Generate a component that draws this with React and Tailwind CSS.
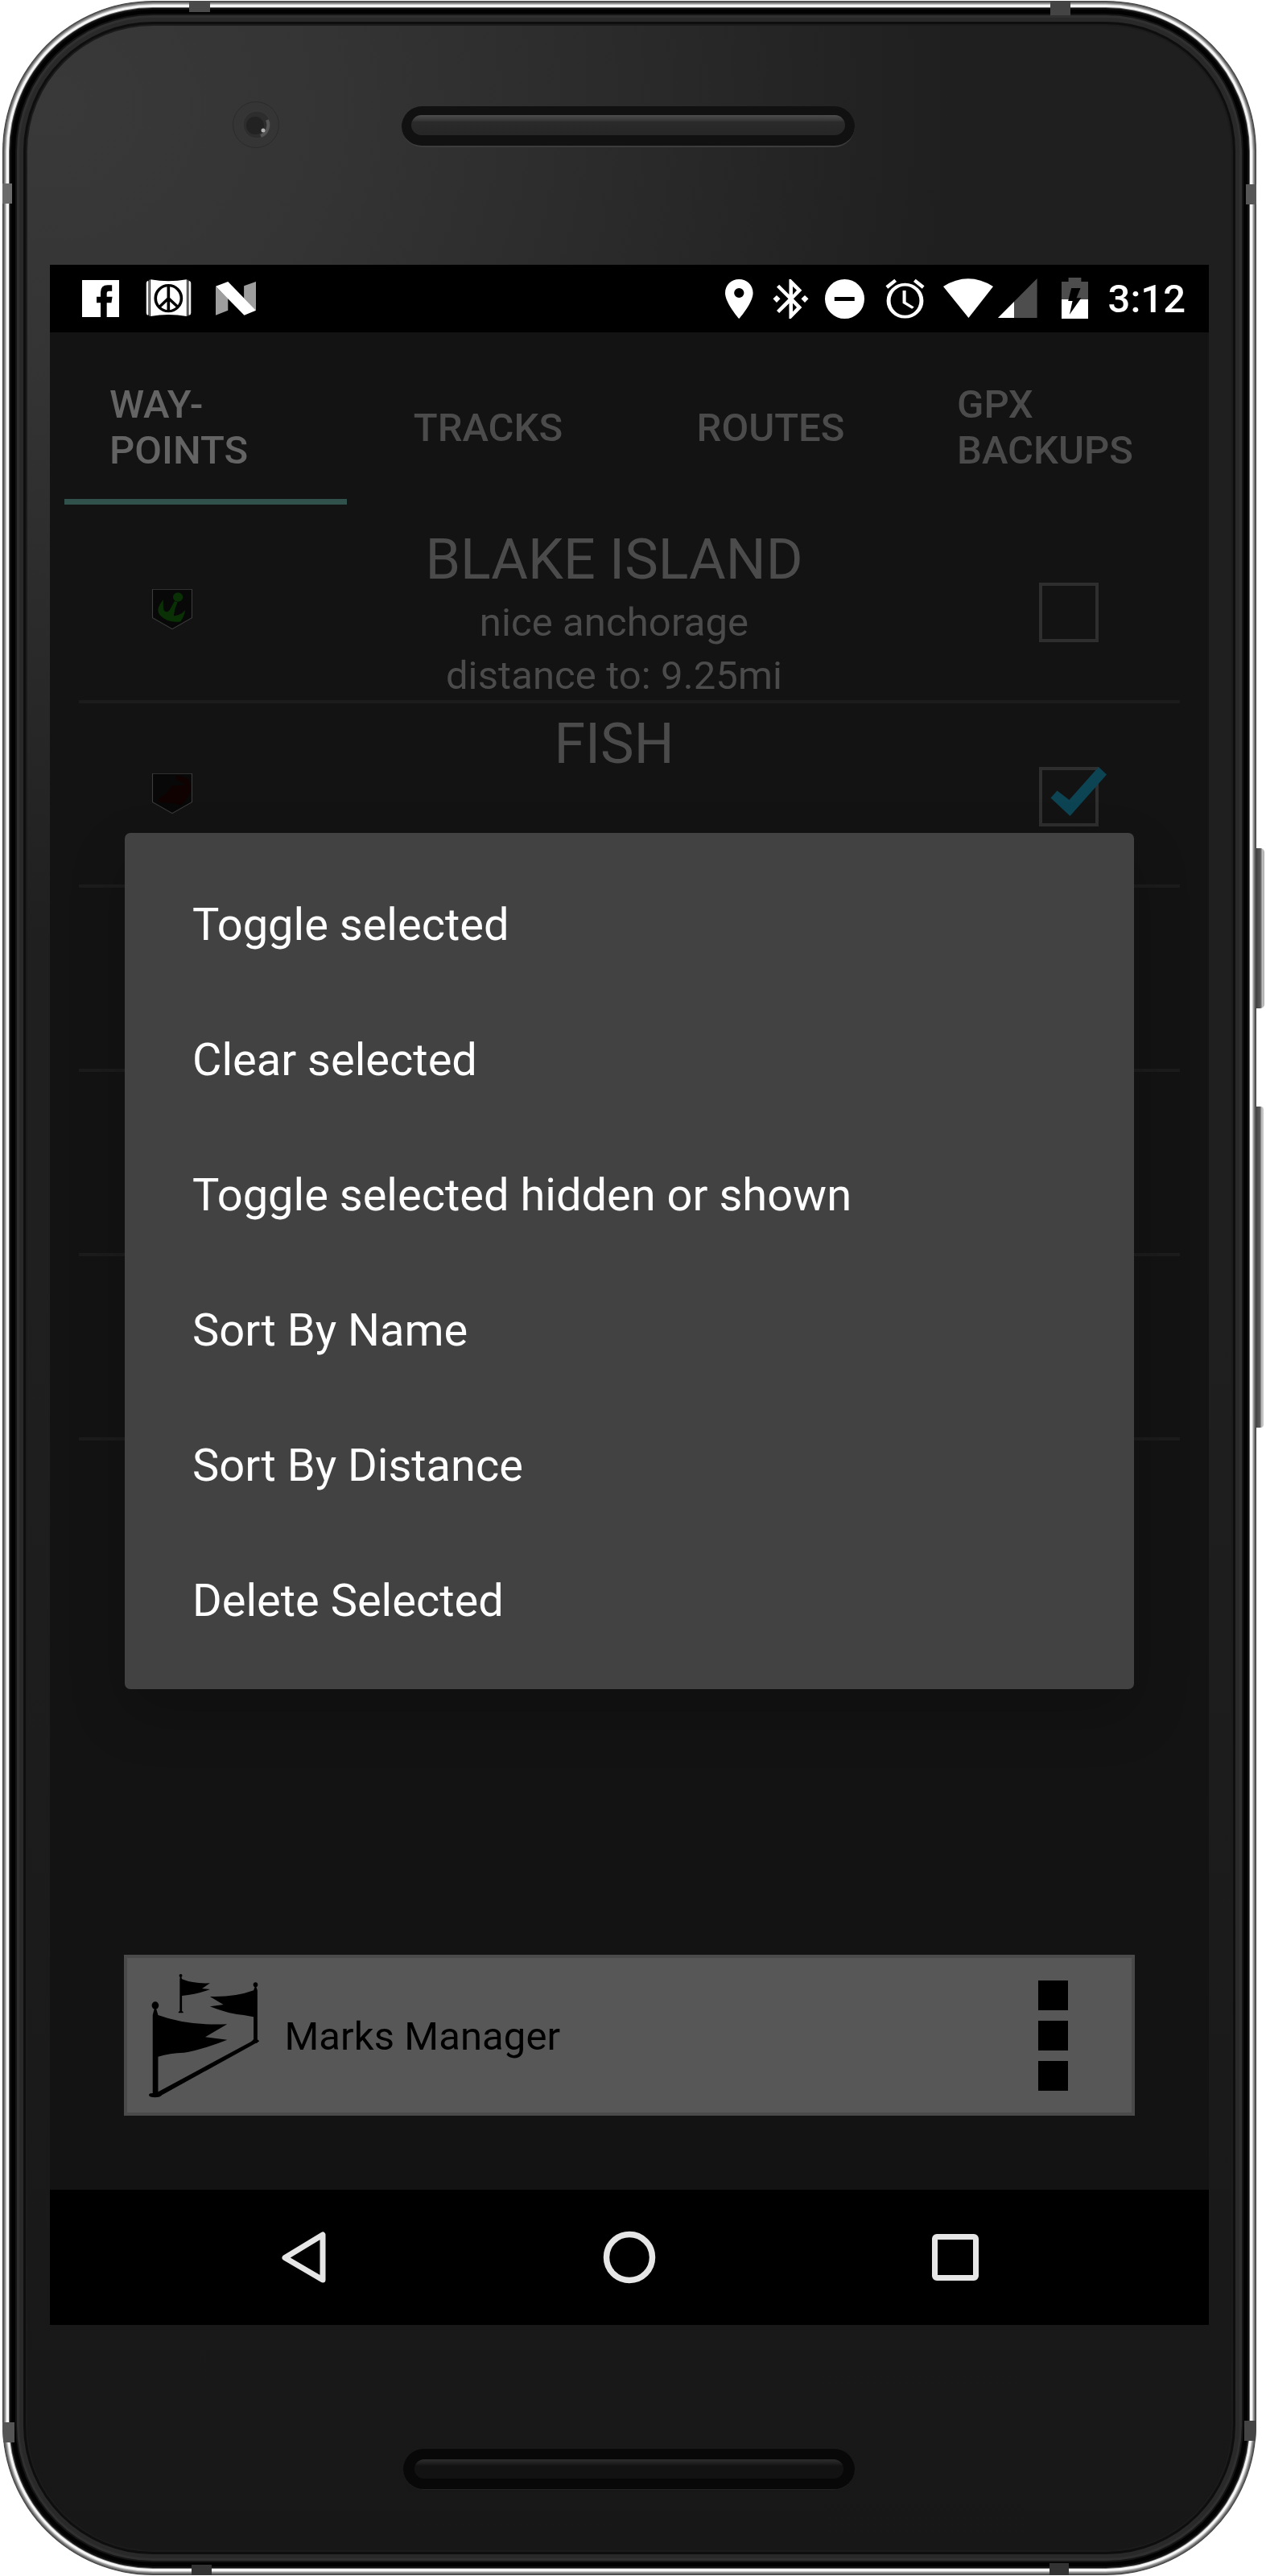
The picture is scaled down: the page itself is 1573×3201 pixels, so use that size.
import React from "react";

const TABS = [
  { label: ["WAY-", "POINTS"], active: true },
  { label: ["TRACKS"] },
  { label: ["ROUTES"] },
  { label: ["GPX", "BACKUPS"] },
];

const MENU = [
  "Toggle selected",
  "Clear selected",
  "Toggle selected hidden or shown",
  "Sort By Name",
  "Sort By Distance",
  "Delete Selected",
];

/* Status glyph: all share a 52px height, drawn on a 156-unit tall grid. */
function Glyph({ x, w, y = 75, width, className, children }) {
  return (
    <svg
      className={"h-[52px] shrink-0 " + (className || "")}
      width={width}
      height="52"
      viewBox={`${x} ${y} ${w} 156`}
      preserveAspectRatio="none"
      fill="#fff"
    >
      {children}
    </svg>
  );
}

function StatusBar() {
  return (
    <div className="flex h-[84px] shrink-0 items-center bg-black pl-[40px]">
      <Glyph x={267} w={120} y={1035} width={46}>
        <path d="M267 1044H387V1182H347V1129H362L365 1106H347V1094Q347 1085 354 1085H364V1063H350Q327 1063 327 1090V1106H314V1129H327V1182H267Z" />
      </Glyph>
      <Glyph x={472} w={150} y={1035} width={57.4} className="ml-[32.6px]">
        <path d="M488 1042Q546 1054 605 1042V1179Q546 1167 488 1179Z" />
        <path d="M480 1048Q475 1048 475 1056V1166Q475 1174 480 1174ZM613 1048Q618 1048 618 1056V1166Q618 1174 613 1174Z" stroke="#fff" strokeWidth="2" />
        <path d="M484.500 1043V1178M608.500 1043V1178" fill="none" stroke="#fff" strokeWidth="2" />
        <g fill="none" stroke="#000" strokeWidth="9.500">
          <ellipse cx="546" cy="1112" rx="42" ry="48" />
          <path d="M546 1064V1160M546 1112L516 1145M546 1112L577 1145" />
        </g>
      </Glyph>
      <Glyph x={700} w={131} y={1035} width={50} className="ml-[30px]">
        <path fill="#9e9e9e" d="M700 1068L740 1112V1157L700 1175ZM792 1066L831 1050V1158L792 1112Z" />
        <path d="M700 1067L740 1050L831 1157L793 1175Z" />
      </Glyph>

      <Glyph x={91} w={76} width={34.6} className="ml-[583.4px]">
        <path fillRule="evenodd" d="M129 81C108 81 91 103 91 132C91 170 129 228 129 228C129 228 167 170 167 132C167 103 150 81 129 81ZM129 150A13.500 18 0 1 1 129 114A13.500 18 0 1 1 129 150Z" />
      </Glyph>
      <Glyph x={220} w={99} width={45} className="ml-[24px]">
        <path d="M265 81H270L300 122L277 154L300 186L270 228H265V171L238 207L231 198L263 154L231 110L238 101L265 138ZM275 108V139L286 122ZM275 170V202L286 186Z" fillRule="evenodd" />
        <path d="M231 141L241 154L231 168L221 154ZM308 141L318 154L308 168L298 154Z" />
      </Glyph>
      <Glyph x={363} w={108} width={49} className="ml-[20px]">
        <path fillRule="evenodd" d="M417 81A54 73.500 0 1 0 417 228A54 73.500 0 1 0 417 81ZM389 147H444V162H389Z" />
      </Glyph>
      <Glyph x={528} w={108} width={49} className="ml-[26px]">
        <ellipse cx="582" cy="161" rx="45" ry="60" fill="none" stroke="#fff" strokeWidth="11" />
        <path d="M580 123V168L604 188" fill="none" stroke="#fff" strokeWidth="9" />
        <path d="M553 80L559 90L535 116L529 106ZM611 80L605 90L629 116L635 106Z" />
      </Glyph>
      <Glyph x={686} w={136} width={62} className="ml-[23px]">
        <path d="M686 108Q754 50 822 108L755 225Z" />
      </Glyph>
      <Glyph x={836} w={107} width={48.6} className="ml-[6px]">
        <path fill="#4d4d4d" d="M943 78V225H836Z" />
        <path d="M880 165V225H836Z" />
      </Glyph>
      <Glyph x={1009} w={73} width={33} className="ml-[30px]">
        <path fill="#4d4d4d" d="M1028 75H1063V90H1082V156H1009V90H1028Z" />
        <path d="M1009 156H1082V228H1009Z" />
        <path fill="#000" d="M1036 114H1061L1050 151H1063L1031 212L1039 162H1027Z" />
      </Glyph>
      <span className="ml-[25px] text-[49px] leading-[57px] font-medium text-white">3:12</span>
    </div>
  );
}

function Tabs() {
  return (
    <div className="mx-[18px] mt-[22px] grid h-[192px] shrink-0 grid-cols-4">
      {TABS.map((t) => (
        <div
          key={t.label[0]}
          className={
            "relative flex items-center justify-center text-[49px] leading-[57px] font-medium " +
            (t.active ? "text-[#646464]" : "text-[#4b4b4b]")
          }
        >
          <div className={t.label.length > 1 ? "w-full pl-[56px]" : ""}>
            {t.label.map((l) => (
              <div key={l} className="whitespace-nowrap">{l}</div>
            ))}
          </div>
          {t.active && <div className="absolute inset-x-0 bottom-0 h-[7px] bg-[#31514d]" />}
        </div>
      ))}
    </div>
  );
}

function Shield({ children }) {
  return (
    <svg className="-mt-[2px] ml-[91px] shrink-0" width="50" height="50" viewBox="0 0 106 130" preserveAspectRatio="none">
      <path d="M1 1H105V93L53 129L1 93Z" fill="#080808" stroke="#3c3c3c" strokeWidth="2.5" />
      {children}
    </svg>
  );
}

const Anchor = () => (
  <Shield>
    <ellipse cx="68" cy="26" rx="13" ry="15" fill="#0a3005" />
    <path fill="#0a3005" d="M59 39L67 42Q58 66 57 87Q74 86 87 68Q86 86 75 105Q40 110 22 86Q6 68 30 34Q28 54 31 68Q38 80 47 66Z" />
  </Shield>
);

const Fish = () => (
  <Shield>
    <path fill="#110202" d="M62 6Q84 10 96 20Q104 34 101 58Q96 78 80 98L74 104L66 98Q40 96 15 92Q18 78 30 72Q46 56 50 42Q64 38 88 38Q76 26 66 22Z" />
  </Shield>
);

function Checkbox({ checked }) {
  return (
    <div className="relative mt-[6px] mr-[101px] h-[74px] w-[74px] shrink-0 border-[4px] border-[#2e2e2e]">
      {checked && (
        <svg className="absolute -top-[6px] left-[9px]" width="72" height="64" viewBox="0 0 72 64">
          <path fill="#0d4453" d="M1.500 40.500L9.500 31.500L24.500 43L61 2L71 11.500L25.500 63Z" />
        </svg>
      )}
    </div>
  );
}

function Row({ icon, title, lines = [], checked, empty }) {
  return (
    <div className="flex h-[229px] shrink-0 items-center border-b-[4px] border-[#1c1c1c]">
      {!empty && (
        <>
          {icon}
          <div className="h-full flex-1 pt-[9px] pr-[4px] text-center text-[#4b4b4b]">
            <div className="mb-[5px] text-[70px] leading-[82px]">{title}</div>
            {lines.map((l) => (
              <div key={l} className="text-[49px] leading-[66px] tracking-[0.1px]">{l}</div>
            ))}
          </div>
          <Checkbox checked={checked} />
        </>
      )}
    </div>
  );
}

function Dialog() {
  return (
    <div className="absolute top-[706px] left-[93px] flex w-[1254px] flex-col rounded-[7px] bg-[#424242] pt-[30px] pb-[26px] shadow-[0_30px_70px_rgba(0,0,0,0.2)]">
      {MENU.map((m) => (
        <div key={m} className="flex h-[168px] items-center px-[84px] text-[56px] leading-[66px] text-white">
          {m}
        </div>
      ))}
    </div>
  );
}

function MarksBar() {
  return (
    <div className="mx-auto mt-auto mb-[92px] flex h-[200px] w-[1256px] shrink-0 items-center border-[4px] border-[#4a4a4b] bg-[#575757]">
      <svg className="ml-[27px] shrink-0" width="138.400" height="156.700" viewBox="140 155 350 470" preserveAspectRatio="none">
        <ellipse cx="160" cy="278" rx="11" ry="14" />
        <path d="M157 290H163L169 314Q260 354 386 348L317 396L386 406Q300 446 250 454Q205 456 169 469V604L181 612Q176 621 160 621Q140 621 140 612Q140 605 152 605V314Z" />
        <path d="M166 602L466 410L480 416L178 614Z" />
        <ellipse cx="475" cy="201" rx="7" ry="9" />
        <path d="M473 208H477L481 222V405L487 411L478 419L462 413L469 404V321L438 314Q390 310 332 282L374 275L332 245Q410 248 469 222Z" />
        <ellipse cx="240" cy="167" rx="5" ry="6" />
        <path d="M238 172H242L244 180Q280 198 332 195L307 215L332 218Q290 238 244 242V299L248 302V306H233V302L237 299V180Z" />
      </svg>
      <span className="mt-[3px] ml-[30px] text-[49px] leading-[57px] tracking-[0.1px] text-black">Marks Manager</span>
      <div className="mr-[79px] ml-auto flex flex-col gap-[13px]">
        <div className="h-[37px] w-[37px] bg-black" />
        <div className="h-[37px] w-[37px] bg-black" />
        <div className="h-[37px] w-[37px] bg-black" />
      </div>
    </div>
  );
}

function NavBar() {
  return (
    <div className="flex h-[168px] shrink-0 items-center bg-black pl-[287px]">
      <svg width="58" height="66" viewBox="0 0 58 66" fill="none" stroke="#e6e6e6" strokeWidth="7" strokeLinejoin="round">
        <path d="M52 5V61L5 33.500Z" />
      </svg>
      <svg className="ml-[342px]" width="66" height="66" viewBox="0 0 66 66" fill="none" stroke="#e6e6e6" strokeWidth="7.500">
        <circle cx="33" cy="33" r="28.500" />
      </svg>
      <div className="ml-[343px] h-[58px] w-[58px] rounded-[6px] border-[7px] border-[#e6e6e6]" />
    </div>
  );
}

function Screen() {
  return (
    <div className="relative flex h-[2560px] w-[1440px] flex-col bg-[#131313]">
      <StatusBar />
      <Tabs />
      <div className="mt-[18px] ml-[36px] flex w-[1368px] flex-col">
        <Row icon={<Anchor />} title="BLAKE ISLAND" lines={["nice anchorage", "distance to: 9.25mi"]} />
        <Row icon={<Fish />} title="FISH" checked />
        <Row empty />
        <Row empty />
        <Row empty />
      </div>
      <MarksBar />
      <NavBar />
      <Dialog />
    </div>
  );
}

function Camera() {
  return (
    <svg className="absolute top-[123px] left-[286px]" width="64" height="64" viewBox="0 0 64 64">
      <circle cx="32" cy="32" r="28.500" fill="#353535" stroke="#2b2b2b" />
      <circle cx="33" cy="32" r="17" fill="#2d2d2d" stroke="#3a3a3a" />
      <circle cx="31" cy="33" r="11" fill="#222" />
      <path d="M46 26A15 15 0 0 1 38 46" fill="none" stroke="#555" strokeWidth="4" />
      <circle cx="41" cy="39" r="2.500" fill="#b5b5b5" />
    </svg>
  );
}

export default function App() {
  return (
    <div className="relative h-[3201px] w-[1573px] overflow-hidden bg-white font-['Roboto',sans-serif]">
      <div className="absolute top-[1054px] left-[1555px] h-[199px] w-[16px] rounded-r-[5px] bg-[linear-gradient(90deg,#444_40%,#5a5a5a_70%,#c4c4c4_85%,#a8a8a8)]" />
      <div className="absolute top-[1375px] left-[1555px] h-[399px] w-[15px] rounded-r-[4px] bg-[linear-gradient(90deg,#444_40%,#5a5a5a_70%,#c4c4c4_85%,#c8c8c8)]" />
      <div className="relative mt-px ml-[3px] flex h-[3199px] w-[1558px] flex-col overflow-hidden rounded-[187px] bg-[radial-gradient(1400px_1300px_at_4%_4%,#393939,#343434_25%,rgba(31,31,31,0.6)_80%,transparent),linear-gradient(180deg,#1f1f1f,#1f1f1f_50%,#171717)] pl-[59px] shadow-[inset_0_0_0_1px_#444,inset_0_0_0_2px_#5c5c5c,inset_0_0_0_3px_#777,inset_0_0_0_4px_#9a9a9a,inset_0_0_0_5px_#c4c4c4,inset_0_0_0_8px_#f6f6f6,inset_0_0_0_9px_#666,inset_0_0_0_11px_#111,inset_0_0_0_16px_#020202,inset_0_0_0_18px_#141414,inset_0_0_0_21px_#303030,inset_0_0_0_26px_#292929,inset_0_0_0_29px_#0e0e0e,inset_0_0_0_31px_#1b1b1b]">
        <div className="h-[328px] shrink-0 pt-[131px] pl-[437px]">
          <div className="flex h-[51px] w-[563px] items-center justify-center rounded-full border-b-2 border-[#3c3c3c] bg-[#111]">
            <div className="mt-[-2px] h-[25px] w-[539px] rounded-full bg-[linear-gradient(180deg,#4c4c4c,#383838_25%,#2a2a2a_35%,#262626)]" />
          </div>
        </div>
        <Screen />
        <div className="pt-[154px] pl-[439px]">
          <div className="flex h-[51px] w-[561px] items-center justify-center rounded-full border-b border-[#222] bg-[#080808]">
            <div className="h-[24px] w-[533px] rounded-full bg-[linear-gradient(180deg,#2c2c2c,#1f1f1f_20%,#121212_35%,#121212)]" />
          </div>
        </div>
        <div className="absolute top-0 left-[232px] h-[14px] w-[26px] bg-[#4a4a4a]" />
        <div className="absolute top-0 left-[1302px] h-[18px] w-[25px] bg-[#444]" />
        <div className="absolute top-[227px] left-0 h-[25px] w-[12px] bg-[#6b6b6b]" />
        <div className="absolute top-[228px] right-0 h-[25px] w-[13px] bg-[#565656]" />
        <div className="absolute bottom-0 left-[235px] h-[13px] w-[25px] bg-[#333]" />
        <div className="absolute bottom-0 left-[1301px] h-[15px] w-[24px] bg-[#333]" />
        <div className="absolute bottom-[165px] left-0 h-[25px] w-[15px] bg-[#555]" />
        <div className="absolute right-0 bottom-[167px] h-[25px] w-[15px] bg-[#444]" />
      </div>
      <Camera />
    </div>
  );
}
